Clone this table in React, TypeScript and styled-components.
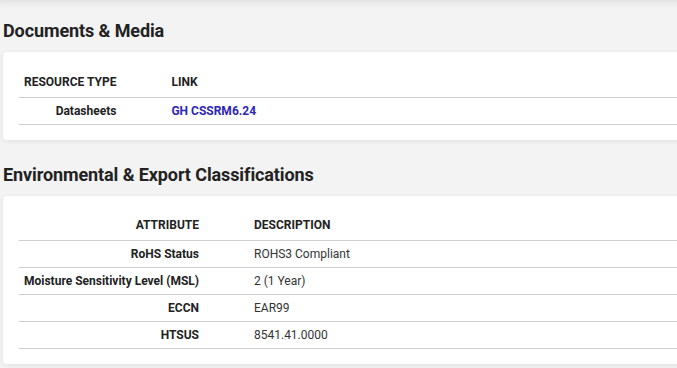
import styled, { createGlobalStyle } from "styled-components"

const GlobalStyle = createGlobalStyle`
    html, body {
        margin: 0;
        padding: 0;
        background: #f3f3f3;
        overflow: hidden;
    }
    body {
        font-family: Roboto, "Liberation Sans", sans-serif;
        color: #222;
    }
`

const documents = [
    { type: 'Datasheets', link: 'GH CSSRM6.24' },
]

const classifications = [
    { attribute: 'RoHS Status', description: 'ROHS3 Compliant' },
    { attribute: 'Moisture Sensitivity Level (MSL)', description: '2 (1 Year)' },
    { attribute: 'ECCN', description: 'EAR99' },
    { attribute: 'HTSUS', description: '8541.41.0000' },
]

export default function App() {
    return (
    <Page>
        <GlobalStyle />
        <Section>
            <Heading>Documents &amp; Media</Heading>
            <Card>
                <Table>
                    <thead>
                        <tr>
                            <HeadCell>Resource Type</HeadCell>
                            <HeadCell $wide>Link</HeadCell>
                        </tr>
                    </thead>
                    <tbody>
                        {documents.map((d) => (
                            <tr key={d.type}>
                                <LabelCell>{d.type}</LabelCell>
                                <ValueCell><DocLink href="#">{d.link}</DocLink></ValueCell>
                            </tr>
                        ))}
                    </tbody>
                </Table>
            </Card>
        </Section>
        <Section>
            <Heading>Environmental &amp; Export Classifications</Heading>
            <Card>
                <Table>
                    <thead>
                        <tr>
                            <HeadCell>Attribute</HeadCell>
                            <HeadCell $wide>Description</HeadCell>
                        </tr>
                    </thead>
                    <tbody>
                        {classifications.map((c) => (
                            <tr key={c.attribute}>
                                <LabelCell>{c.attribute}</LabelCell>
                                <ValueCell>{c.description}</ValueCell>
                            </tr>
                        ))}
                    </tbody>
                </Table>
            </Card>
        </Section>
    </Page>)
}

const Page = styled.div`
    width: 760px;
    min-height: 368px;
    padding: 20px 0 0 3px;
    box-sizing: border-box;
    box-shadow: inset 0 7px 7px -5px rgba(0, 0, 0, 0.09);
`
const Section = styled.section`
    & + & {
        margin-top: 24px;
    }
`
const Heading = styled.h2`
    margin: 0 0 10px;
    font-size: 18px;
    line-height: 22px;
    font-weight: 700;
    letter-spacing: -0.1px;
    color: #222;
`
const Card = styled.div`
    background: #fff;
    border-radius: 4px;
    padding: 16px 16px 15px;
    box-shadow: 0 1px 5px rgba(0, 0, 0, 0.08);
`
const Table = styled.table`
    width: 100%;
    border-collapse: collapse;
    font-size: 12px;
    line-height: 14px;

    tr {
        border-bottom: 1px solid #cfcfcf;
    }
`
const HeadCell = styled.th<{ $wide?: boolean }>`
    height: 29px;
    padding: 0 5px 1px ${p => p.$wide ? '50px' : '5px'};
    box-sizing: border-box;
    text-align: ${p => p.$wide ? 'left' : 'right'};
    width: ${p => p.$wide ? '100%' : 'auto'};
    white-space: nowrap;
    text-transform: uppercase;
    font-weight: 700;
    color: #222;
`
const LabelCell = styled.td`
    height: 26px;
    padding: 0 5px;
    text-align: right;
    white-space: nowrap;
    font-weight: 700;
    color: #222;
`
const ValueCell = styled.td`
    height: 26px;
    padding: 0 5px 0 50px;
    color: #333;
`
const DocLink = styled.a`
    color: #2e26b8;
    font-weight: 700;
    text-decoration: none;
`
